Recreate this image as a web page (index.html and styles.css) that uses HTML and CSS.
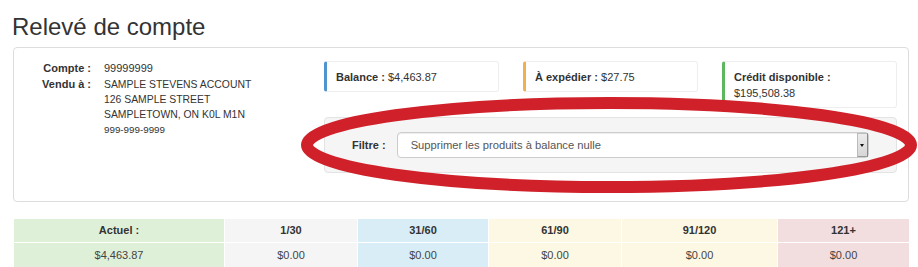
FILE: index.html
```html
<!DOCTYPE html>
<html lang="fr">
<head>
  <meta charset="UTF-8">
  <meta name="viewport" content="width=device-width, initial-scale=1.0">
  <title>Relevé de compte</title>
  <link rel="stylesheet" href="styles.css">
</head>
<body>
  <div class="page">
    <h1 class="page-title">Relevé de compte</h1>

    <div class="panel">
      <dl class="account">
        <dt>Compte :</dt>
        <dd class="account-number">99999999</dd>
        <dt>Vendu à :</dt>
        <dd class="address">
          SAMPLE STEVENS ACCOUNT<br>
          126 SAMPLE STREET<br>
          SAMPLETOWN, ON K0L M1N<br>
          <small>999-999-9999</small>
        </dd>
      </dl>

      <div class="summary">
        <div class="stats">
          <div class="stat stat-balance"><b>Balance :</b> $4,463.87</div>
          <div class="stat stat-shipping"><b>À expédier :</b> $27.75</div>
          <div class="stat stat-credit"><b>Crédit disponible :</b> $195,508.38</div>
        </div>

        <div class="well">
          <label for="filter">Filtre :</label>
          <div class="select-wrap">
            <select id="filter" class="select">
              <option>Supprimer les produits à balance nulle</option>
              <option>Afficher tous les produits</option>
            </select>
            <span class="select-arrow"></span>
          </div>
        </div>
      </div>
    </div>

    <table class="aging">
      <thead>
        <tr>
          <th class="col-current success">Actuel :</th>
          <th class="col-30 active">1/30</th>
          <th class="col-60 info">31/60</th>
          <th class="col-90 warning">61/90</th>
          <th class="col-120 warning">91/120</th>
          <th class="col-over danger">121+</th>
        </tr>
      </thead>
      <tbody>
        <tr>
          <td class="success">$4,463.87</td>
          <td class="active">$0.00</td>
          <td class="info">$0.00</td>
          <td class="warning">$0.00</td>
          <td class="warning">$0.00</td>
          <td class="danger">$0.00</td>
        </tr>
      </tbody>
    </table>
  </div>

  <svg class="annotation" width="918" height="267" viewBox="0 0 918 267">
    <ellipse cx="609" cy="145" rx="302" ry="42" fill="none" stroke="#d0212a" stroke-width="12"/>
  </svg>
</body>
</html>
```

FILE: styles.css
```css
body {
  font-family: 'Liberation Sans', Arial, sans-serif;
  margin: 0;
  padding: 0;
  color: #333;
  background-color: #fff;
}

.page {
  width: 896px;
  padding-left: 13px;
}

.page-title {
  font-size: 24px;
  font-weight: normal;
  line-height: 26px;
  margin: 14px 0 7px -1px;
  color: #333;
}

/* account panel */
.panel {
  display: flex;
  border: 1px solid #ddd;
  border-radius: 4px;
  padding: 13px 11px 28px 0;
}

.account {
  width: 310px;
  margin: 0;
  display: grid;
  grid-template-columns: 77px 1fr;
  column-gap: 13px;
  align-content: start;
  font-size: 11px;
  line-height: 15px;
}

.account dt {
  font-weight: bold;
  text-align: right;
}

.account dd {
  margin: 0;
}

.account .account-number {
  margin-bottom: 1px;
}

.address {
  font-size: 10.4px;
}

.address small {
  font-size: 9.8px;
}

.summary {
  flex: 1;
}

.stats {
  display: grid;
  grid-template-columns: repeat(3, 175px);
  column-gap: 24px;
  align-items: start;
}

.stat {
  font-size: 11px;
  line-height: 16px;
  padding: 7px 9px 6px;
  border: 1px solid #eee;
  border-left: 3px solid #ccc;
  border-radius: 3px;
}

.stat-balance {
  border-left-color: #4f93d1;
}

.stat-shipping {
  border-left-color: #f0b050;
}

.stat-credit {
  border-left-color: #5cb85c;
}

.well {
  display: flex;
  align-items: center;
  gap: 11px;
  margin-top: 9px;
  padding: 14px 27px;
  background-color: #f5f5f5;
  border: 1px solid #e3e3e3;
  border-radius: 4px;
}

.well label {
  font-size: 11px;
  font-weight: bold;
}

.select-wrap {
  position: relative;
  flex: 1;
}

.select {
  display: block;
  width: 100%;
  height: 26px;
  padding: 0 13px;
  font-family: inherit;
  font-size: 11.2px;
  color: #555;
  background-color: #fff;
  border: 1px solid #ccc;
  border-radius: 4px;
  box-shadow: inset 0 1px 1px rgba(0, 0, 0, 0.075);
  appearance: none;
  -webkit-appearance: none;
}

.select-arrow {
  position: absolute;
  top: 1px;
  right: 1px;
  width: 11px;
  height: 24px;
  box-sizing: border-box;
  background: linear-gradient(#ececec, #d6d6d6);
  border: 1px solid #bbb;
  border-right-color: #888;
  border-bottom-color: #999;
  pointer-events: none;
}

.select-arrow::after {
  content: '';
  position: absolute;
  left: 2px;
  top: 10px;
  border-left: 2.5px solid transparent;
  border-right: 2.5px solid transparent;
  border-top: 3px solid #111;
}

/* aging table */
.aging {
  width: 895px;
  margin: 17px 0 0 1px;
  border-collapse: separate;
  border-spacing: 0;
  table-layout: fixed;
  font-size: 11px;
  line-height: 16px;
  text-align: center;
}

.aging th,
.aging td {
  box-sizing: border-box;
  border-right: 1px solid #fff;
}

.aging th {
  font-weight: bold;
  padding: 3px 5px 4px;
  border-bottom: 1px solid #fff;
}

.aging td {
  color: #444;
  padding: 4px 5px;
}

.aging th:last-child,
.aging td:last-child {
  border-right: none;
}

.col-current { width: 211px; }
.col-30 { width: 133px; }
.col-60 { width: 131px; }
.col-90 { width: 133px; }
.col-120 { width: 156px; }
.col-over { width: 131px; }

.success { background-color: #dff0d8; }
.active { background-color: #f5f5f5; }
.info { background-color: #d9edf7; }
.warning { background-color: #fcf8e3; }
.danger { background-color: #f2dede; }

/* red marker circled over the filter */
.annotation {
  position: absolute;
  top: 0;
  left: 0;
  pointer-events: none;
}
```
